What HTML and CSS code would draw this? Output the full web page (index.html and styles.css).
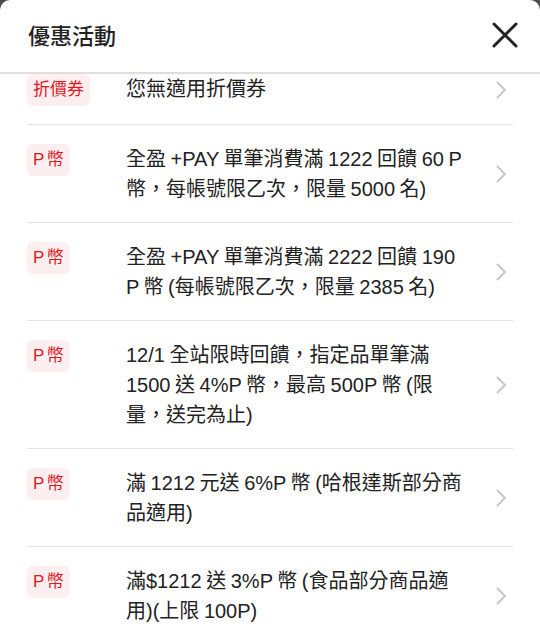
FILE: index.html
```html
<!DOCTYPE html>
<html lang="zh-Hant">
<head>
  <meta charset="UTF-8">
  <meta name="viewport" content="width=device-width, initial-scale=1.0">
  <title>優惠活動</title>
  <link rel="stylesheet" href="styles.css">
</head>
<body>
  <div class="sheet">
    <div class="sheet-header">
      <h1>優惠活動</h1>
      <button class="close" aria-label="關閉">
        <svg width="26" height="26" viewBox="0 0 26 26"><path d="M2 2 L24 24 M24 2 L2 24" stroke="#222" stroke-width="3" stroke-linecap="round"/></svg>
      </button>
    </div>

    <div class="sheet-body">
      <ul class="promo-list">
        <li class="promo">
          <div class="tag-col"><span class="tag">折價券</span></div>
          <div class="promo-text">您無適用折價券</div>
          <span class="arrow"><svg width="12" height="20" viewBox="0 0 12 20"><path d="M2 2 L10 10 L2 18" fill="none" stroke="#c6c6c6" stroke-width="2"/></svg></span>
        </li>
        <li class="promo">
          <div class="tag-col"><span class="tag">P 幣</span></div>
          <div class="promo-text">全盈 +PAY 單筆消費滿 1222 回饋 60 P 幣，每帳號限乙次，限量 5000 名)</div>
          <span class="arrow"><svg width="12" height="20" viewBox="0 0 12 20"><path d="M2 2 L10 10 L2 18" fill="none" stroke="#c6c6c6" stroke-width="2"/></svg></span>
        </li>
        <li class="promo">
          <div class="tag-col"><span class="tag">P 幣</span></div>
          <div class="promo-text">全盈 +PAY 單筆消費滿 2222 回饋 190 P 幣 (每帳號限乙次，限量 2385 名)</div>
          <span class="arrow"><svg width="12" height="20" viewBox="0 0 12 20"><path d="M2 2 L10 10 L2 18" fill="none" stroke="#c6c6c6" stroke-width="2"/></svg></span>
        </li>
        <li class="promo">
          <div class="tag-col"><span class="tag">P 幣</span></div>
          <div class="promo-text">12/1 全站限時回饋，指定品單筆滿 1500 送 4%P 幣，最高 500P 幣 (限量，送完為止)</div>
          <span class="arrow"><svg width="12" height="20" viewBox="0 0 12 20"><path d="M2 2 L10 10 L2 18" fill="none" stroke="#c6c6c6" stroke-width="2"/></svg></span>
        </li>
        <li class="promo">
          <div class="tag-col"><span class="tag">P 幣</span></div>
          <div class="promo-text">滿 1212 元送 6%P 幣 (哈根達斯部分商品適用)</div>
          <span class="arrow"><svg width="12" height="20" viewBox="0 0 12 20"><path d="M2 2 L10 10 L2 18" fill="none" stroke="#c6c6c6" stroke-width="2"/></svg></span>
        </li>
        <li class="promo">
          <div class="tag-col"><span class="tag">P 幣</span></div>
          <div class="promo-text">滿$1212 送 3%P 幣 (食品部分商品適用)(上限 100P)</div>
          <span class="arrow"><svg width="12" height="20" viewBox="0 0 12 20"><path d="M2 2 L10 10 L2 18" fill="none" stroke="#c6c6c6" stroke-width="2"/></svg></span>
        </li>
      </ul>
    </div>
  </div>
</body>
</html>
```

FILE: styles.css
```css
body {
  margin: 0;
  width: 540px;
  height: 640px;
  overflow: hidden;
  background-color: #4a4a4a;
  font-family: "Liberation Sans", "Noto Sans CJK TC", sans-serif;
  color: #222;
}
.sheet {
  height: 640px;
  background-color: #fff;
  border-radius: 10px 10px 0 0;
  overflow: hidden;
}
.sheet-header {
  height: 72px;
  display: flex;
  align-items: center;
  justify-content: space-between;
  padding: 0 22px 0 28px;
  border-bottom: 2px solid #dedede;
}
.sheet-header h1 {
  margin: 0 0 5px;
  font-size: 22px;
  font-weight: 500;
  color: #222;
}
.close {
  border: none;
  background: none;
  padding: 0;
  display: flex;
  margin-top: -3px;
}
.sheet-body {
  overflow: hidden;
}
.promo-list {
  list-style: none;
  margin: -19px 0 0;
  padding: 0 27px;
}
.promo {
  display: flex;
  align-items: flex-start;
  padding: 19px 0 18px;
  border-bottom: 1px solid #e3e3e3;
}
.tag-col {
  width: 99px;
  flex-shrink: 0;
}
.tag {
  display: inline-block;
  height: 32px;
  line-height: 32px;
  padding: 0 6px;
  border-radius: 6px;
  background-color: #fdeff0;
  color: #e0191f;
  font-size: 17px;
  word-spacing: -2px;
}
.promo-text {
  width: 336px;
  font-size: 20px;
  line-height: 30px;
  word-spacing: -1px;
}
.arrow {
  margin-left: auto;
  margin-right: 6px;
  align-self: center;
  display: flex;
}
```
